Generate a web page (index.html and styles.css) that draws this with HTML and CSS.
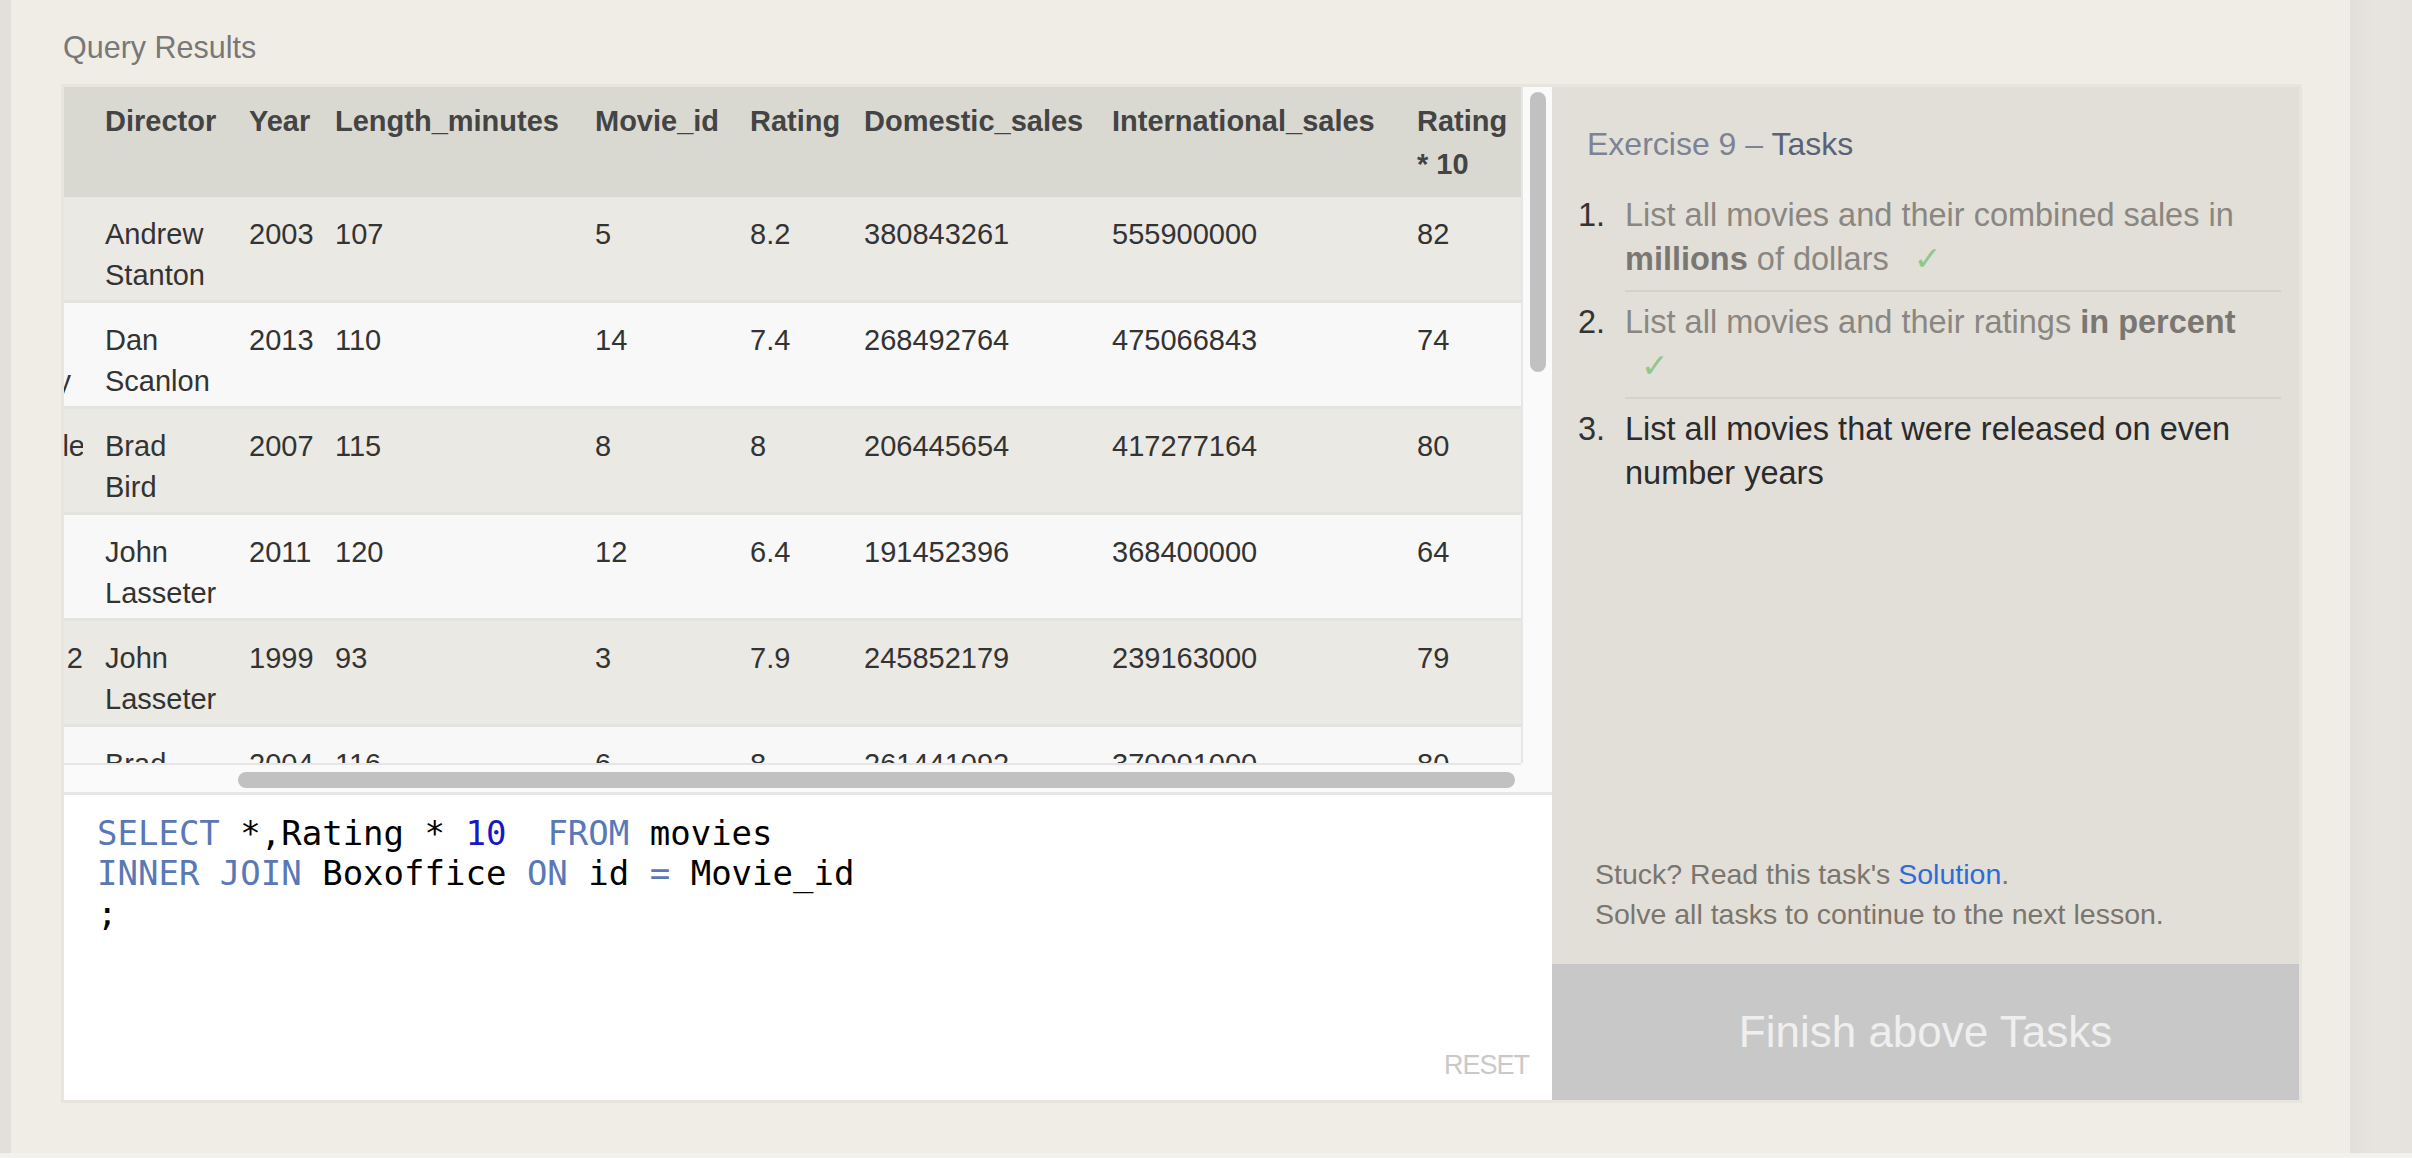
FILE: index.html
```html
<!DOCTYPE html>
<html>
<head>
<meta charset="utf-8">
<title>Query Results</title>
<link rel="stylesheet" href="styles.css">
</head>
<body>
<div class="page">
  <div class="main">
    <div class="side-left"></div>
    <div class="card">
      <h2 class="section-title">Query Results</h2>
      <div class="exercise">
        <div class="workspace">
          <div class="results">
            <div class="viewport">
              <table class="results-table">
                <thead>
                  <tr>
                    <th class="c0"></th>
                    <th class="c1">Director</th>
                    <th class="c2">Year</th>
                    <th class="c3">Length_minutes</th>
                    <th class="c4">Movie_id</th>
                    <th class="c5">Rating</th>
                    <th class="c6">Domestic_sales</th>
                    <th class="c7">International_sales</th>
                    <th class="c8">Rating * 10</th>
                  </tr>
                </thead>
                <tbody>
                  <tr>
                    <td class="frag"><div class="clip"></div></td>
                    <td><span class="name">Andrew Stanton</span></td>
                    <td>2003</td><td>107</td><td>5</td><td>8.2</td><td>380843261</td><td>555900000</td><td>82</td>
                  </tr>
                  <tr>
                    <td class="frag"><div class="clip"><span>&nbsp;</span><span class="off-wide">University</span></div></td>
                    <td><span class="name">Dan Scanlon</span></td>
                    <td>2013</td><td>110</td><td>14</td><td>7.4</td><td>268492764</td><td>475066843</td><td>74</td>
                  </tr>
                  <tr>
                    <td class="frag"><div class="clip"><span class="off-tight">Ratatouille</span></div></td>
                    <td><span class="name">Brad Bird</span></td>
                    <td>2007</td><td>115</td><td>8</td><td>8</td><td>206445654</td><td>417277164</td><td>80</td>
                  </tr>
                  <tr>
                    <td class="frag"><div class="clip"></div></td>
                    <td><span class="name">John Lasseter</span></td>
                    <td>2011</td><td>120</td><td>12</td><td>6.4</td><td>191452396</td><td>368400000</td><td>64</td>
                  </tr>
                  <tr>
                    <td class="frag"><div class="clip"><span>Toy Story 2</span></div></td>
                    <td><span class="name">John Lasseter</span></td>
                    <td>1999</td><td>93</td><td>3</td><td>7.9</td><td>245852179</td><td>239163000</td><td>79</td>
                  </tr>
                  <tr>
                    <td class="frag"><div class="clip"></div></td>
                    <td><span class="name">Brad Bird</span></td>
                    <td>2004</td><td>116</td><td>6</td><td>8</td><td>261441092</td><td>370001000</td><td>80</td>
                  </tr>
                </tbody>
              </table>
            </div>
            <div class="vtrack"><div class="vthumb"></div></div>
            <div class="htrack"><div class="hthumb"></div></div>
            <div class="corner"></div>
          </div>
          <div class="editor">
<pre class="code"><span class="kw">SELECT</span> *,Rating * <span class="lit">10</span>  <span class="kw">FROM</span> movies
<span class="kw">INNER JOIN</span> Boxoffice <span class="kw">ON</span> id <span class="kw">=</span> Movie_id
;</pre>
            <span class="reset">RESET</span>
          </div>
        </div>
        <div class="tasks">
          <h3 class="tasks-title">Exercise 9 – <span class="strong-title">Tasks</span></h3>
          <ol class="task-list">
            <li class="task done">
              <span class="num">1.</span>
              <div class="task-text">List all movies and their combined sales in <strong>millions</strong> of dollars <span class="check">✓</span></div>
            </li>
            <li class="task done">
              <span class="num">2.</span>
              <div class="task-text">List all movies and their ratings <strong>in percent</strong> <span class="check">✓</span></div>
            </li>
            <li class="task current">
              <span class="num">3.</span>
              <div class="task-text">List all movies that were released on even number years</div>
            </li>
          </ol>
          <div class="help">
            <div>Stuck? Read this task's <a href="#">Solution</a>.</div>
            <div>Solve all tasks to continue to the next lesson.</div>
          </div>
          <div class="finish">Finish above Tasks</div>
        </div>
      </div>
    </div>
    <div class="side-right"></div>
  </div>
  <div class="bottom-band"></div>
</div>
</body>
</html>
```

FILE: styles.css
```css
* {
  box-sizing: border-box;
}

html,
body {
  margin: 0;
  padding: 0;
}

body {
  width: 2412px;
  height: 1158px;
  overflow: hidden;
  background: #e4e1dd;
  font-family: "Liberation Sans", Arial, sans-serif;
  color: #333;
}

.page {
  display: flex;
  flex-direction: column;
  height: 1158px;
}

.main {
  display: flex;
  height: 1153px;
}

.side-left {
  width: 11px;
  background: #e3e0dc;
}

.card {
  width: 2339px;
  background: #f0ede6;
  padding: 29px 48px 0 50px;
}

.side-right {
  flex: 1;
  background: linear-gradient(to right, #e2dfdb, #e7e4e0 40%, #e6e3df);
}

.bottom-band {
  height: 5px;
  background: #f3f1ed;
}

.section-title {
  margin: 0 0 19px 2px;
  font-size: 30.5px;
  line-height: 36px;
  font-weight: normal;
  color: #787878;
}

.exercise {
  display: grid;
  grid-template-columns: 1488px 747px;
  width: 2241px;
  height: 1019px;
  border: 3px solid #e8e5de;
}

/* ---------- left: results + editor ---------- */

.workspace {
  display: flex;
  flex-direction: column;
  min-width: 0;
}

.results {
  display: grid;
  grid-template-columns: 1457px 31px;
  grid-template-rows: 676px 29px;
  background: #fafafa;
  border-bottom: 3px solid #e6e6e4;
}

.viewport {
  overflow: hidden;
  background: #f8f8f8;
}

.vtrack {
  border-left: 2px solid #e6e6e6;
  padding: 5px 0 0 7px;
}

.vthumb {
  width: 16px;
  height: 280px;
  border-radius: 8px;
  background: #c1c1c1;
}

.htrack {
  border-top: 2px solid #e6e6e6;
  padding: 7px 0 0 174px;
}

.hthumb {
  width: 1277px;
  height: 16px;
  border-radius: 8px;
  background: #c1c1c1;
}

.corner {
  background: #fafafa;
}

.results-table {
  table-layout: fixed;
  width: 1457px;
  border-collapse: separate;
  border-spacing: 0;
  font-size: 29px;
}

.results-table th {
  background: #dad9d1;
  color: #444;
  font-weight: bold;
  text-align: left;
  vertical-align: top;
  line-height: 43px;
  padding: 13px 11px 11px;
}

.results-table td {
  vertical-align: top;
  line-height: 41px;
  padding: 17px 11px 4px;
  border-bottom: 3px solid #e3e3e0;
  color: #333;
}

.results-table tbody tr:nth-child(odd) td {
  background: #ebe9e3;
}

.results-table tbody tr:nth-child(even) td {
  background: #f8f8f8;
}

.c0 { width: 30px; }
.c1 { width: 144px; }
.c2 { width: 86px; }
.c3 { width: 260px; }
.c4 { width: 155px; }
.c5 { width: 114px; }
.c6 { width: 248px; }
.c7 { width: 305px; }
.c8 { width: 115px; }

.results-table .frag {
  padding-left: 0;
  padding-right: 11px;
}

.clip {
  overflow: hidden;
  display: flex;
  flex-direction: column;
  align-items: flex-end;
}

.clip span {
  white-space: nowrap;
  flex-shrink: 0;
}

.clip .off-wide {
  margin-right: 12px;
}

.clip .off-tight {
  margin-right: -2px;
}

.name {
  display: block;
  width: min-content;
}

.editor {
  flex: 1;
  background: #fff;
  display: flex;
  flex-direction: column;
  padding: 18px 23px 19px 33px;
}

.code {
  flex: 1;
  margin: 0;
  font-family: "DejaVu Sans Mono", monospace;
  font-size: 34px;
  line-height: 40px;
  color: #000;
}

.kw {
  color: #5a78b6;
}

.lit {
  color: #1717c4;
}

.reset {
  align-self: flex-end;
  font-size: 27px;
  line-height: 31px;
  letter-spacing: -1px;
  color: #c9c9c9;
}

/* ---------- right: tasks ---------- */

.tasks {
  display: flex;
  flex-direction: column;
  background: #e2dfd8;
  padding: 35px 18px 0 26px;
}

.tasks-title {
  margin: 0 0 19px 9px;
  font-size: 32px;
  line-height: 44px;
  font-weight: normal;
  color: #7b8394;
}

.strong-title {
  color: #5a6275;
}

.task-list {
  list-style: none;
  margin: 0;
  padding: 0;
}

.task {
  display: flex;
  font-size: 32.5px;
  line-height: 44px;
}

.num {
  width: 47px;
  flex-shrink: 0;
  padding-top: 8px;
  color: #333;
}

.task-text {
  flex: 1;
  padding: 8px 0 9px;
  border-bottom: 2px solid #d5d2ca;
}

.task:last-child .task-text {
  border-bottom: none;
}

.done .task-text {
  color: #8a8782;
}

.done strong {
  color: #7a7773;
}

.current .task-text {
  color: #2b2b2b;
}

.check {
  display: inline-block;
  margin-left: 16px;
  font-family: "DejaVu Sans", sans-serif;
  font-size: 33px;
  line-height: 30px;
  color: #8dc88d;
}

.help {
  margin: auto 0 30px 17px;
  font-size: 28.5px;
  line-height: 40px;
  color: #7a756e;
}

.help a {
  color: #2a6dd8;
  text-decoration: none;
}

.finish {
  margin: 0 -18px 0 -26px;
  height: 136px;
  display: flex;
  align-items: center;
  justify-content: center;
  background: #c8c8c8;
  color: #efefef;
  font-size: 44px;
}
```
